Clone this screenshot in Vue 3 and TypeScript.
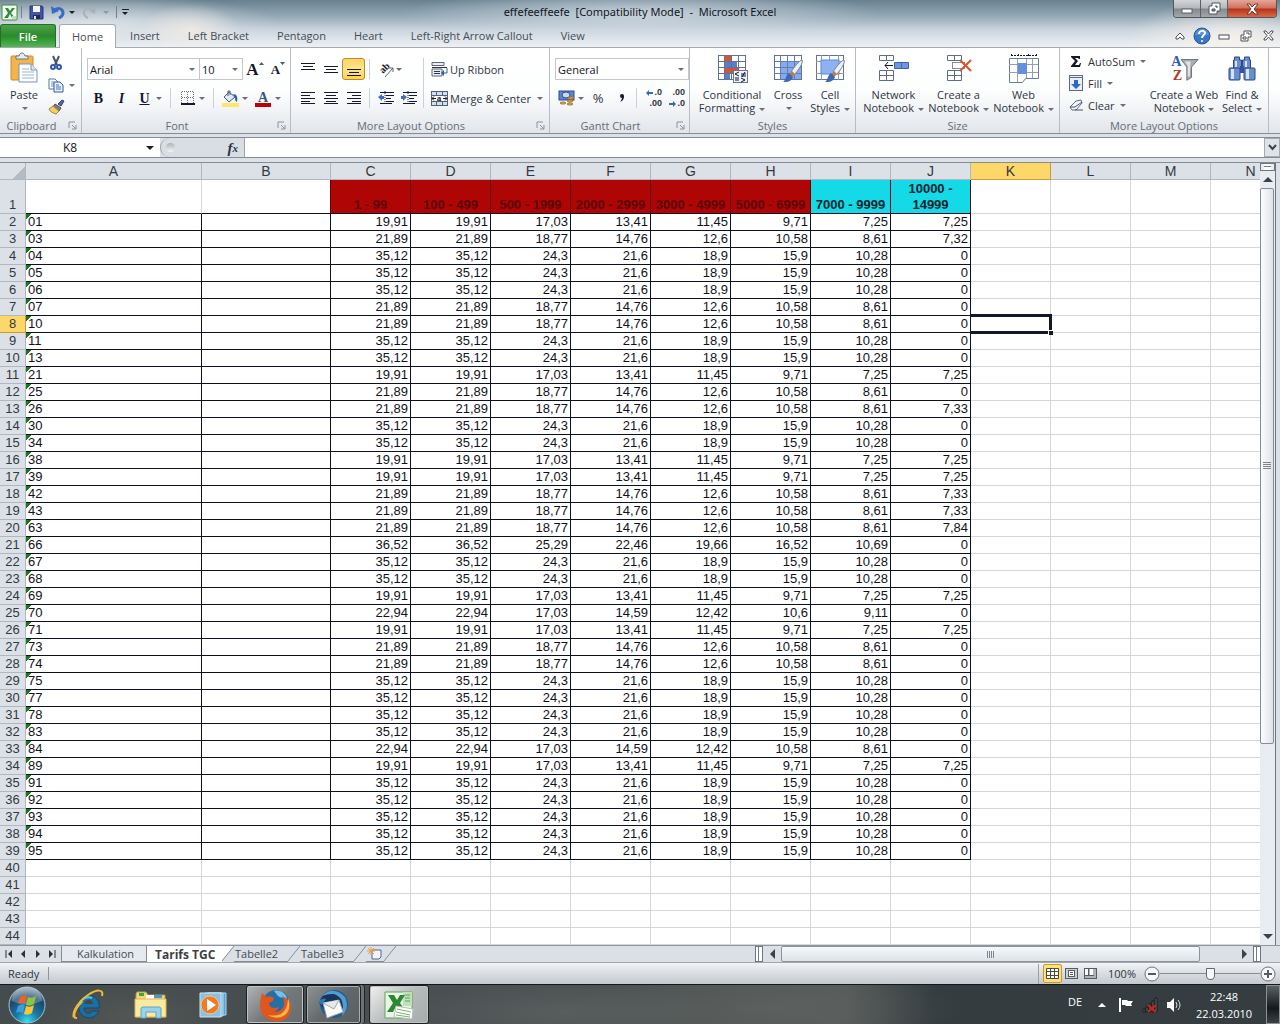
<script setup lang="ts">
import { ref } from 'vue'

interface PriceRow {
  code: string
  values: string[]
}

const profiles: Record<string, string[]> = {
  a: ['19,91', '19,91', '17,03', '13,41', '11,45', '9,71', '7,25'],
  b: ['21,89', '21,89', '18,77', '14,76', '12,6', '10,58', '8,61'],
  c: ['35,12', '35,12', '24,3', '21,6', '18,9', '15,9', '10,28'],
  d: ['36,52', '36,52', '25,29', '22,46', '19,66', '16,52', '10,69'],
  e: ['22,94', '22,94', '17,03', '14,59', '12,42', '10,6', '9,11'],
  f: ['22,94', '22,94', '17,03', '14,59', '12,42', '10,58', '8,61'],
}

// code, price profile and the price for the largest quantity
const source: [string, string, string][] = [
  ['01', 'a', '7,25'], ['03', 'b', '7,32'], ['04', 'c', '0'], ['05', 'c', '0'], ['06', 'c', '0'],
  ['07', 'b', '0'], ['10', 'b', '0'], ['11', 'c', '0'], ['13', 'c', '0'], ['21', 'a', '7,25'],
  ['25', 'b', '0'], ['26', 'b', '7,33'], ['30', 'c', '0'], ['34', 'c', '0'], ['38', 'a', '7,25'],
  ['39', 'a', '7,25'], ['42', 'b', '7,33'], ['43', 'b', '7,33'], ['63', 'b', '7,84'], ['66', 'd', '0'],
  ['67', 'c', '0'], ['68', 'c', '0'], ['69', 'a', '7,25'], ['70', 'e', '0'], ['71', 'a', '7,25'],
  ['73', 'b', '0'], ['74', 'b', '0'], ['75', 'c', '0'], ['77', 'c', '0'], ['78', 'c', '0'],
  ['83', 'c', '0'], ['84', 'f', '0'], ['89', 'a', '7,25'], ['91', 'c', '0'], ['92', 'c', '0'],
  ['93', 'c', '0'], ['94', 'c', '0'], ['95', 'c', '0'],
]
const rows: PriceRow[] = source.map(([code, key, last]) => ({ code, values: [...profiles[key], last] }))

const columns = 'ABCDEFGHIJKLMN'.split('')
const ranges = ['1 - 99', '100 - 499', '500 - 1999', '2000 - 2999', '3000 - 4999', '5000 - 6999', '7000 - 9999', '10000 - 14999']
const emptyRows = [40, 41, 42, 43, 44]
const ribbonTabs = ['Home', 'Insert', 'Left Bracket', 'Pentagon', 'Heart', 'Left-Right Arrow Callout', 'View']
const activeTab = ref('Home')
const activeCell = ref('K8')
const formula = ref('')
const zoom = ref(50)
</script>

<template>
  <div class="window">
    <header class="chrome">
      <div class="titlebar">
        <div class="quick">
          <svg width="17" height="17" viewBox="0 0 17 17"><rect x="1" y="1" width="15" height="15" rx="1" fill="#f3faf3" stroke="#3a8a3e" /><path d="M4 4h3l2 3 2-3h3l-4 5 4 5h-3l-2-4-2 4H3l4-5z" fill="#2f8c37" /><path d="M11 12h4v3h-4z" fill="#b9dfbb" /></svg>
          <span class="bar"></span>
          <button class="plain q1" aria-label="Save"><svg width="15" height="15" viewBox="0 0 15 15"><path d="M1 1h12l1 1v12H1z" fill="#4354a5" stroke="#28356f" /><path d="M4 1h7v6H4z" fill="#f3f6fc" /><path d="M4 10h7v4H4z" fill="#22294b" /><path d="M5 11h2v3H5z" fill="#dfe5f3" /></svg></button>
          <button class="plain q2" aria-label="Undo"><svg width="14" height="13" viewBox="0 0 14 13"><path d="M3 5c3-4 9-3 9 2 0 3-2 4-4 5" fill="none" stroke="#3a6cc0" stroke-width="3" /><path d="M0 0l1 8 7-3z" fill="#3a6cc0" /></svg></button>
          <i class="caret dark"></i>
          <button class="plain q4" aria-label="Redo"><svg width="14" height="13" viewBox="0 0 14 13"><path d="M11 5C8 1 2 2 2 7c0 3 2 4 4 5" fill="none" stroke="#a9b1b8" stroke-width="2" /><path d="M14 0l-1 8-6-3z" fill="#a9b1b8" /></svg></button>
          <i class="caret faded"></i>
          <span class="bar last"></span>
          <button class="plain q3" aria-label="Customize toolbar"><span class="overline"></span><i class="caret dark"></i></button>
        </div>
        <h1>effefeeffeefe&nbsp; [Compatibility Mode]&nbsp; -&nbsp; Microsoft Excel</h1>
        <div class="controls">
          <button aria-label="Minimize"><svg width="12" height="12" viewBox="0 0 12 12"><rect x="1" y="6" width="10" height="4" fill="#fff" stroke="#5b6168" /></svg></button>
          <button aria-label="Restore"><svg width="13" height="13" viewBox="0 0 13 13"><path d="M4 1h8v8h-3v3H1V4h3z" fill="#fff" stroke="#50565e" /><path d="M4 7h3v2H4zM7 4h2v2" fill="#7d858d" stroke="#50565e" /></svg></button>
          <button class="close" aria-label="Close"><svg width="13" height="12" viewBox="0 0 13 12"><path d="M1 1h3l2 3 3-3h3L8 6l4 5H9L6 8l-2 3H1l4-5z" fill="#fff" stroke="#6a3830" /></svg></button>
        </div>
      </div>
      <nav class="tabs">
        <button class="file">File</button>
        <button v-for="tab in ribbonTabs" :key="tab" :class="['tab', { active: tab === activeTab }]" @click="activeTab = tab">{{ tab }}</button>
        <div class="docbuttons">
          <button class="plain" aria-label="Collapse ribbon"><svg width="10" height="10" viewBox="0 0 10 10"><path d="M1 6l4-4 4 4v2H7L5 6 3 8H1z" fill="#fff" stroke="#4a4f58" /></svg></button>
          <button class="plain" aria-label="Help"><svg width="18" height="18" viewBox="0 0 18 18"><circle cx="9" cy="9" r="8" fill="#3b77c8" stroke="#2a559c" /><path d="M2 8a7 6 0 0 1 14 0" fill="#6fa0de" opacity=".6" /><path d="M6 7c0-4 6-4 6-1 0 2-3 2-3 5" fill="none" stroke="#fff" stroke-width="2" /><circle cx="9" cy="14" r="1" fill="#fff" /></svg></button>
          <button class="plain" aria-label="Minimize workbook"><svg width="12" height="12" viewBox="0 0 12 12"><rect x="1" y="5" width="10" height="4" fill="#fff" stroke="#4a4f58" /></svg></button>
          <button class="plain" aria-label="Restore workbook"><svg width="12" height="12" viewBox="0 0 12 12"><path d="M4 1h7v6H8v4H1V5h3z" fill="#fff" stroke="#4a4f58" /><path d="M3 7h3v2H3zM6 3h3v2" fill="none" stroke="#4a4f58" /></svg></button>
          <button class="plain" aria-label="Close workbook"><svg width="11" height="11" viewBox="0 0 11 11"><path d="M1 1h2l2.500 3L8 1h2v1L7 5.500 10 9v1H8L5.500 7 3 10H1V9l3-3.500L1 2z" fill="#fff" stroke="#4a4f58" /></svg></button>
        </div>
      </nav>
    </header>

    <section class="ribbon">
      <div class="group g-clip">
        <div class="body top">
          <button class="large paste">
            <svg width="28" height="32" viewBox="0 0 28 32"><rect x="1" y="4" width="22" height="24" rx="1" fill="#f2b44d" stroke="#c98a2c" /><path d="M6 7V4h3c1-4 5-4 6 0h3v3z" fill="#e8ecf0" stroke="#6b7683" /><path d="M9 12h12l6 6v12H9z" fill="#fdfeff" stroke="#7d93b2" /><path d="M21 12v6h6" fill="#dce6f3" stroke="#7d93b2" /><path d="M12 17h7M12 20h12M12 23h12M12 26h12" stroke="#9fb4d2" /></svg>
            <span>Paste</span><span class="line"><i class="caret"></i></span>
          </button>
          <div class="stack">
            <button class="plain" aria-label="Cut"><svg width="16" height="16" viewBox="0 0 16 16"><path d="M5 1l4 9M11 1L7 10" stroke="#4a5364" stroke-width="2" fill="none" /><circle cx="5" cy="12" r="2" fill="none" stroke="#3158a8" stroke-width="2" /><circle cx="11" cy="12" r="2" fill="none" stroke="#3158a8" stroke-width="2" /></svg></button>
            <button class="plain" aria-label="Copy"><svg width="16" height="16" viewBox="0 0 16 16"><path d="M1 2h6l3 3v7H1z" fill="#fff" stroke="#5675a8" /><path d="M3 5h3M3 7h5M3 9h5" stroke="#6b93d0" /><path d="M6 5h6l3 3v7H6z" fill="#e9f1fc" stroke="#35599a" /><path d="M8 8h3M8 10h5M8 12h5" stroke="#4374c0" /></svg><i class="caret"></i></button>
            <button class="plain" aria-label="Format Painter"><svg width="17" height="16" viewBox="0 0 17 16"><path d="M10 5l4-4 2 1-3 5z" fill="#566a9c" stroke="#364571" /><path d="M7 5l6 4-2 3-6-4z" fill="#7c7f86" stroke="#4d5058" /><path d="M5 7l6 5-3 3c-3-1-6-2-7-5z" fill="#f5cf61" stroke="#a6843a" /></svg></button>
          </div>
        </div>
        <div class="caption"><span class="pad">Clipboard</span><svg width="9" height="9" viewBox="0 0 9 9"><path d="M1 7V1h6M4 4l4 4M8 4v4H4" fill="none" stroke="#8d939b" /></svg></div>
      </div>

      <div class="group g-font">
        <div class="body two">
          <div class="row">
            <span class="pick w-font"><select aria-label="Font"><option>Arial</option></select></span>
            <span class="pick w-size"><select aria-label="Font size"><option>10</option></select></span>
            <button class="tool serif big" aria-label="Grow Font">A<svg width="5" height="3" viewBox="0 0 5 3"><path d="M0 3h5L2.500 0z" fill="#3d5b93" /></svg></button>
            <button class="tool serif mid" aria-label="Shrink Font">A<svg width="5" height="3" viewBox="0 0 5 3"><path d="M0 0h5L2.500 3z" fill="#3d5b93" /></svg></button>
          </div>
          <div class="row">
            <button class="tool serif b">B</button>
            <button class="tool serif i">I</button>
            <button class="tool serif u">U</button><i class="caret"></i>
            <span class="sep"></span>
            <button class="tool" aria-label="Borders"><svg width="14" height="14" viewBox="0 0 14 14"><path d="M1 .5h12M1 6.500h12M.5 1v12M6.500 1v12M12.500 1v12" stroke="#6c7179" stroke-dasharray="1 1" /><path d="M0 13h14" stroke="#16192e" stroke-width="2" /></svg></button><i class="caret"></i>
            <span class="sep"></span>
            <button class="tool" aria-label="Fill Color"><svg width="17" height="17" viewBox="0 0 17 17"><path d="M7 2l6 5-6 5-5-5z" fill="#dfe8f4" stroke="#465d86" /><path d="M6 6V1h2v4" fill="none" stroke="#465d86" /><path d="M11 4c4 0 5 3 4 8-2-1-2-3-2-5z" fill="#2e5fae" /><rect y="13" width="17" height="4" fill="#ffe66a" /></svg></button><i class="caret"></i>
            <button class="tool fontc" aria-label="Font Color"><svg width="17" height="18" viewBox="0 0 17 18"><text x="8" y="13" text-anchor="middle" font-family="Liberation Serif, serif" font-weight="700" font-size="14" fill="#3a5489">A</text><rect y="14" width="16" height="4" fill="#c00000" /></svg></button><i class="caret"></i>
          </div>
        </div>
        <div class="caption"><span class="pad">Font</span><svg width="9" height="9" viewBox="0 0 9 9"><path d="M1 7V1h6M4 4l4 4M8 4v4H4" fill="none" stroke="#8d939b" /></svg></div>
      </div>

      <div class="group g-align">
        <div class="body split">
          <div class="half">
            <div class="row">
              <button class="tool" aria-label="Top Align"><svg width="14" height="14" viewBox="0 0 14 14"><path d="M0 1.500h14M2 4.500h10M0 7.500h14" stroke="#15182c" /></svg></button>
              <button class="tool" aria-label="Middle Align"><svg width="14" height="14" viewBox="0 0 14 14"><path d="M0 4.500h14M2 7.500h10M0 10.500h14" stroke="#15182c" /></svg></button>
              <button class="tool on" aria-label="Bottom Align"><svg width="14" height="14" viewBox="0 0 14 14"><path d="M0 7.500h14M2 10.500h10M0 13.500h14" stroke="#15182c" /></svg></button>
              <span class="sep"></span>
              <button class="tool orient" aria-label="Orientation"><svg width="18" height="17" viewBox="0 0 18 17"><text transform="rotate(-45 6 13)" x="6" y="13" font-family="Liberation Serif, serif" font-weight="700" font-size="10" fill="#16192b">ab</text><path d="M8 16l8-9M16 11V7h-4" fill="none" stroke="#5c626c" /></svg><i class="caret"></i></button>
            </div>
            <div class="row">
              <button class="tool" aria-label="Align Left"><svg width="14" height="14" viewBox="0 0 14 14"><path d="M0 1.500h14M0 4.500h9M0 7.500h14M0 10.500h9M0 12.500h14" stroke="#15182c" /></svg></button>
              <button class="tool" aria-label="Center"><svg width="14" height="14" viewBox="0 0 14 14"><path d="M0 1.500h14M2 4.500h10M0 7.500h14M2 10.500h10M0 12.500h14" stroke="#15182c" /></svg></button>
              <button class="tool" aria-label="Align Right"><svg width="14" height="14" viewBox="0 0 14 14"><path d="M0 1.500h14M5 4.500h9M0 7.500h14M5 10.500h9M0 12.500h14" stroke="#15182c" /></svg></button>
              <span class="sep"></span>
              <button class="tool" aria-label="Decrease Indent"><svg width="16" height="14" viewBox="0 0 16 14"><path d="M2 1.500h14M8 4.500h8M8 7.500h5M8 10.500h8M2 12.500h12" stroke="#15182c" /><path d="M7 0v14" stroke="#15182c" stroke-dasharray="1 1" /><path d="M0 6l4-3v2h2v3H4v2z" fill="#3c6fc0" /></svg></button>
              <button class="tool" aria-label="Increase Indent"><svg width="16" height="14" viewBox="0 0 16 14"><path d="M2 1.500h14M8 4.500h8M8 7.500h5M8 10.500h8M2 12.500h12" stroke="#15182c" /><path d="M7 0v14" stroke="#15182c" stroke-dasharray="1 1" /><path d="M6 6L2 3v2H0v3h2v2z" fill="#3c6fc0" /></svg></button>
            </div>
          </div>
          <span class="tallsep"></span>
          <div class="half right">
            <button class="text"><svg width="17" height="15" viewBox="0 0 17 15"><path d="M1 .5h12v3H1zM1 7h10v7H1z" fill="#e6eef9" stroke="#5f6672" /><path d="M1 5.500h15M3 9.500h6M3 11.500h6" stroke="#2d3450" /><path d="M16 6v5h-3" fill="none" stroke="#2e5fae" /><path d="M13 8v6l-3-3z" fill="#2e5fae" /></svg>Up Ribbon</button>
            <button class="text"><svg width="17" height="15" viewBox="0 0 17 15"><rect x=".5" y=".5" width="16" height="14" fill="#cfe0f6" stroke="#56606f" /><path d="M0 4.500h17M0 10.500h17M5.500 0v4M11.500 0v4M5.500 11v4M11.500 11v4" stroke="#56606f" /><rect x="1" y="5" width="15" height="5" fill="#fff" /><path d="M1 7.500h4M12 7.500h4M3 5.500L1 7.500 3 9.500M14 5.500l2 2-2 2" stroke="#15182c" fill="none" /><text x="8" y="10" text-anchor="middle" font-family="Liberation Serif, serif" font-weight="700" font-size="9" fill="#15182c">a</text></svg>Merge &amp; Center<i class="caret"></i></button>
          </div>
        </div>
        <div class="caption"><span class="pad">More Layout Options</span><svg width="9" height="9" viewBox="0 0 9 9"><path d="M1 7V1h6M4 4l4 4M8 4v4H4" fill="none" stroke="#8d939b" /></svg></div>
      </div>

      <div class="group g-number">
        <div class="body two">
          <div class="row"><span class="pick w-num"><select aria-label="Number format"><option>General</option></select></span></div>
          <div class="row">
            <button class="tool" aria-label="Currency"><svg width="17" height="16" viewBox="0 0 17 16"><rect x="1" y="1" width="15" height="9" fill="#5f86cb" stroke="#2a4b8d" /><ellipse cx="8" cy="5" rx="4" ry="3" fill="#c6d8f2" stroke="#2a4b8d" /><g fill="#f2b54a" stroke="#a8742a"><ellipse cx="12" cy="14" rx="3" ry="1" /><ellipse cx="12" cy="11" rx="3" ry="1" /><ellipse cx="13" cy="8" rx="3" ry="1" /><ellipse cx="5" cy="13" rx="3" ry="1" /></g></svg></button><i class="caret"></i>
            <button class="tool pct">%</button>
            <button class="tool comma" aria-label="Comma Style"><svg width="6" height="10" viewBox="0 0 6 10"><circle cx="3" cy="3" r="2" fill="#16192b" /><path d="M5 3c0 3-1 5-4 6 1-1 2-3 2-5z" fill="#16192b" /></svg></button>
            <span class="sep narrow"></span>
            <button class="tool dec" aria-label="Increase Decimal"><span><svg width="7" height="6" viewBox="0 0 7 6"><path d="M0 3l3-3v2h4v2H3v2z" fill="#2e6bc0" /></svg>.0</span><span>.00</span></button>
            <button class="tool dec" aria-label="Decrease Decimal"><span>.00</span><span><svg width="7" height="6" viewBox="0 0 7 6"><path d="M7 3L4 0v2H0v2h4v2z" fill="#2e6bc0" /></svg>.0</span></button>
          </div>
        </div>
        <div class="caption"><span class="pad">Gantt Chart</span><svg width="9" height="9" viewBox="0 0 9 9"><path d="M1 7V1h6M4 4l4 4M8 4v4H4" fill="none" stroke="#8d939b" /></svg></div>
      </div>

      <div class="group g-styles">
        <div class="body top">
          <button class="large w70">
            <svg width="32" height="32" viewBox="0 0 32 32"><rect x="2.500" y="3.500" width="27" height="24" fill="#fff" stroke="#63728d" /><path d="M9 4h7v5H9zM9 16h14v5H9z" fill="#e2502b" /><path d="M9 10h12v5H9zM9 22h5v5H9z" fill="#4f82d6" /><path d="M2 9.500h28M2 15.500h28M2 21.500h28M8.500 3v25M15.500 3v25M22.500 3v25" stroke="#63728d" /><rect x="17.500" y="18.500" width="14" height="12" fill="#eef3fb" stroke="#67758e" /><path d="M23 20l-4 2 4 2M19 26h4M19 28h4M25 22h5M25 24h5M29 20l-3 5M25 26l4 2-4 2" fill="none" stroke="#15182c" /></svg>
            <span>Conditional</span><span>Formatting <i class="caret"></i></span>
          </button>
          <button class="large w42">
            <svg width="32" height="32" viewBox="0 0 32 32"><rect x="2.500" y="3.500" width="27" height="24" fill="#fff" stroke="#63728d" /><rect x="9" y="9" width="20" height="18" fill="#86abec" /><path d="M2 9.500h28M2 15.500h28M2 21.500h28M8.500 3v25M15.500 3v25M22.500 3v25" stroke="#5f7eb5" /><path d="M30 8c2 2-4 11-8 15l-3-3c3-5 9-12 11-12z" fill="#eceff3" stroke="#7c8390" /><path d="M20 19l3 3-3 3-3-3z" fill="#b87d4b" /><path d="M17 21l4 4c-2 5-6 5-10 5 3-2 2-6 6-9z" fill="#3c68b4" /></svg>
            <span>Cross</span><span class="line"><i class="caret"></i></span>
          </button>
          <button class="large w42">
            <svg width="32" height="32" viewBox="0 0 32 32"><rect x="2.500" y="3.500" width="27" height="24" fill="#fff" stroke="#63728d" /><path d="M2 9.500h28M2 21.500h28M7.500 3v25M15.500 3v25M24.500 3v25" stroke="#8a9cba" /><rect x="7" y="8" width="18" height="14" fill="#8cb2f2" stroke="#628ad0" /><path d="M30 8c2 2-4 11-8 15l-3-3c3-5 9-12 11-12z" fill="#eceff3" stroke="#7c8390" /><path d="M20 19l3 3-3 3-3-3z" fill="#b87d4b" /><path d="M17 21l4 4c-2 5-6 5-10 5 3-2 2-6 6-9z" fill="#3c68b4" /></svg>
            <span>Cell</span><span>Styles <i class="caret"></i></span>
          </button>
        </div>
        <div class="caption"><span>Styles</span></div>
      </div>

      <div class="group g-size">
        <div class="body top">
          <button class="large w65">
            <svg width="32" height="32" viewBox="0 0 32 32"><path d="M1.500 3.500h14v5h-14zM8.500 3v6M1.500 18.500h14v10h-14zM1 23.500h15M8.500 18v11" fill="#fff" stroke="#5f6e88" /><path d="M16.500 10.500h14v6h-14z" fill="#6a96e4" stroke="#3f65a9" /><path d="M23.500 10v7" stroke="#3f65a9" /><path d="M7 13.500h8M10 10l-3 3.500 3 3.500" fill="none" stroke="#15182c" stroke-width="1" /></svg>
            <span>Network</span><span>Notebook <i class="caret"></i></span>
          </button>
          <button class="large w65">
            <svg width="32" height="32" viewBox="0 0 32 32"><path d="M4.500 3.500h14v5h-14zM11.500 3v6M4.500 18.500h14v10h-14zM4 23.500h15M11.500 18v11" fill="#fff" stroke="#5f6e88" /><path d="M9.500 10.500h12v6h-12z" fill="none" stroke="#15182c" stroke-dasharray="1 1" /><path d="M17 8l11 11M28 8L17 19" stroke="#df522a" stroke-width="2" /></svg>
            <span>Create a</span><span>Notebook <i class="caret"></i></span>
          </button>
          <button class="large w65">
            <svg width="32" height="32" viewBox="0 0 32 32"><path d="M3 3.500h26M3.500 2v3M28.500 2v3M10.500 2v3M20.500 2v3" stroke="#15182c" stroke-dasharray="2 1" /><path d="M1.500 6.500h29v20h-13l-3 4h-13z" fill="#fff" stroke="#6d7c95" /><path d="M1 12.500h29M1 20.500h29M9.500 7v23M18.500 7v19M24.500 7v19" stroke="#93a1b7" /><rect x="10" y="11" width="9" height="11" fill="#658fe0" /></svg>
            <span>Web</span><span>Notebook <i class="caret"></i></span>
          </button>
        </div>
        <div class="caption"><span>Size</span></div>
      </div>

      <div class="group g-edit">
        <div class="body top">
          <div class="stack wide">
            <button class="text"><svg width="14" height="16" viewBox="0 0 14 16"><path d="M2 3h9v3h-1l-1-1H6l3 3-3 4h4l1-2h1l-1 4H2v-1l4-5-4-4z" fill="#15182c" /></svg>AutoSum <i class="caret"></i></button>
            <button class="text"><svg width="14" height="16" viewBox="0 0 14 16"><rect x=".5" y=".5" width="13" height="15" fill="#e8f0fb" stroke="#5d6b86" /><path d="M0 2.500h14" stroke="#5d6b86" /><path d="M5 5h4v4h3l-5 5-5-5h3z" fill="#2c67c4" /></svg>Fill <i class="caret"></i></button>
            <button class="text"><svg width="14" height="16" viewBox="0 0 14 16"><path d="M1 10l6-6 5-1 1 3-6 7H3z" fill="#f4f7fb" stroke="#5d6b86" /><path d="M1 10h5l7-5M6 13h8" fill="none" stroke="#47536b" /></svg>Clear <i class="caret"></i></button>
          </div>
          <button class="large w80">
            <svg width="32" height="34" viewBox="0 0 32 34"><path d="M13 8h18l-7 8v11l-5 3V16z" fill="#a9adb3" stroke="#6a6f76" /><path d="M17 10h6l-1 16h-2V15z" fill="#e1e3e6" /><text x="8" y="15" text-anchor="middle" font-family="Liberation Serif, serif" font-weight="700" font-size="15" fill="#2f5bb0">A</text><text x="9" y="30" text-anchor="middle" font-family="Liberation Serif, serif" font-weight="700" font-size="15" fill="#b3362c">Z</text></svg>
            <span>Create a Web</span><span>Notebook <i class="caret"></i></span>
          </button>
          <button class="large w40">
            <svg width="32" height="32" viewBox="0 0 32 32"><g fill="#6b8fcc" stroke="#2b4784"><path d="M8.500 5h5v3h2v9h-8V8h1zM18.500 5h5v3h1v9h-8V8h2z" /><rect x="3" y="16" width="11" height="12" rx="1" /><rect x="18" y="16" width="11" height="12" rx="1" /></g><path d="M14 14h4v7h-4z" fill="#34529a" /><path d="M5 17h3v10H5zM20 17h3v10h-3zM9 9h2v6H9zM19 9h2v6h-2z" fill="#d5e2f7" /></svg>
            <span>Find &amp;</span><span>Select <i class="caret"></i></span>
          </button>
        </div>
        <div class="caption"><span>More Layout Options</span></div>
      </div>
    </section>

    <section class="formula">
      <label class="namebox"><input v-model="activeCell" aria-label="Name Box" /><i class="caret dark"></i></label>
      <div class="fx"><span class="knob"></span><button class="plain">f<sub>x</sub></button></div>
      <input v-model="formula" class="entry" aria-label="Formula" />
      <button class="expand" aria-label="Expand formula bar"><svg width="9" height="7" viewBox="0 0 9 7"><path d="M1 1l3.500 4L8 1" fill="none" stroke="#3d444d" stroke-width="2" /></svg></button>
    </section>

    <main class="sheet">
      <div class="cells">
        <table>
          <colgroup><col class="c-head" /><col class="c-a" /><col class="c-b" /><col v-for="n in 12" :key="n" class="c-n" /></colgroup>
          <thead>
            <tr><th class="corner"></th><th v-for="c in columns" :key="c" scope="col" :class="{ sel: c === 'K' }">{{ c }}</th></tr>
          </thead>
          <tbody>
            <tr class="tall">
              <th scope="row">1</th>
              <td class="under"></td><td class="under edge"></td>
              <td v-for="(r, i) in ranges" :key="r" :class="['range', i < 6 ? 'red' : 'cyan']">{{ r }}</td>
              <td v-for="n in 4" :key="n"></td>
            </tr>
            <tr v-for="(row, i) in rows" :key="row.code">
              <th scope="row" :class="{ sel: i === 6 }">{{ i + 2 }}</th>
              <td class="ink code">{{ row.code }}</td>
              <td class="ink"></td>
              <td v-for="(v, j) in row.values" :key="j" class="ink num">{{ v }}</td>
              <td :class="{ cursor: i === 6 }"><span v-if="i === 6" class="frame"></span></td>
              <td></td><td></td><td></td>
            </tr>
            <tr v-for="n in emptyRows" :key="n"><th scope="row">{{ n }}</th><td v-for="c in columns" :key="c"></td></tr>
          </tbody>
        </table>
      </div>
      <div class="vscroll">
        <span class="splitbox"></span>
        <button aria-label="Scroll up"><i class="tri up"></i></button>
        <div class="thumb"><span class="grip"></span></div>
        <div class="track"></div>
        <button aria-label="Scroll down"><i class="tri down"></i></button>
      </div>
    </main>

    <section class="sheetbar">
      <div class="nav">
        <button class="plain" aria-label="First sheet"><svg width="8" height="8" viewBox="0 0 8 8"><path d="M1 0v8" stroke="#2c3138" stroke-width="1" /><path d="M7 0v8L3 4z" fill="#2c3138" /></svg></button>
        <button class="plain" aria-label="Previous sheet"><svg width="8" height="8" viewBox="0 0 8 8"><path d="M6 0v8L2 4z" fill="#2c3138" /></svg></button>
        <button class="plain" aria-label="Next sheet"><svg width="8" height="8" viewBox="0 0 8 8"><path d="M2 0v8l4-4z" fill="#2c3138" /></svg></button>
        <button class="plain" aria-label="Last sheet"><svg width="8" height="8" viewBox="0 0 8 8"><path d="M7 0v8" stroke="#2c3138" stroke-width="1" /><path d="M1 0v8l4-4z" fill="#2c3138" /></svg></button>
      </div>
      <button class="stab first">Kalkulation</button>
      <button class="stab current">Tarifs TGC</button>
      <svg width="12" height="16" viewBox="0 0 12 16"><path d="M0 0h12L0 14z" fill="#fff" /><path d="M0 15L12 0" stroke="#858c96" /></svg>
      <button class="stab">Tabelle2</button>
      <svg width="12" height="16" viewBox="0 0 12 16"><path d="M0 15L12 0" stroke="#858c96" /></svg>
      <button class="stab">Tabelle3</button>
      <svg width="12" height="16" viewBox="0 0 12 16"><path d="M0 15L12 0" stroke="#858c96" /></svg>
      <button class="stab new" aria-label="Insert sheet"><svg width="16" height="13" viewBox="0 0 16 13"><path d="M5 3h9v7l-2 2H5z" fill="#f2f6fc" stroke="#4f6695" /><path d="M4 0v8M0 4h8M1 1l6 6M7 1L1 7" stroke="#e7a13a" /></svg></button>
      <svg width="12" height="16" viewBox="0 0 12 16"><path d="M0 15L12 0" stroke="#858c96" /></svg>
      <div class="hscroll">
        <span class="vsplit"></span>
        <button aria-label="Scroll left"><i class="tri left"></i></button>
        <div class="hthumb"><span class="vgrip"></span></div>
        <div class="htrack"></div>
        <button aria-label="Scroll right"><i class="tri rightward"></i></button>
        <span class="vsplit"></span>
      </div>
    </section>

    <footer class="status">
      <span class="ready">Ready</span>
      <div class="view">
        <button class="on" aria-label="Normal view"><svg width="13" height="11" viewBox="0 0 13 11"><path d="M.5.5h12v10H.5zM0 3.500h13M0 7.500h13M4.500 0v11M8.500 0v11" fill="#fff" stroke="#4d4a3c" /></svg></button>
        <button aria-label="Page layout"><svg width="13" height="11" viewBox="0 0 13 11"><rect x=".5" y=".5" width="12" height="10" fill="#c9ced4" stroke="#585d64" /><rect x="3.500" y="2.500" width="6" height="6" fill="#fff" stroke="#585d64" /><path d="M5 4.500h3M5 6.500h3" stroke="#585d64" /></svg></button>
        <button aria-label="Page break preview"><svg width="13" height="11" viewBox="0 0 13 11"><rect x=".5" y=".5" width="12" height="10" fill="#aeb3ba" stroke="#585d64" /><path d="M1 1h3v6H1zM6 1h3v6H6z" fill="#fff" /><path d="M4.500 1v6M1 7.500h9" stroke="#585d64" /></svg></button>
        <span class="pctlabel">100%</span>
        <button class="round" aria-label="Zoom out"><svg width="16" height="16" viewBox="0 0 16 16"><circle cx="8" cy="8" r="7" fill="#f7f8fa" stroke="#6d737b" /><path d="M4 8h8" stroke="#555b63" stroke-width="2" /></svg></button>
        <input v-model="zoom" type="range" min="0" max="100" aria-label="Zoom" />
        <button class="round" aria-label="Zoom in"><svg width="16" height="16" viewBox="0 0 16 16"><circle cx="8" cy="8" r="7" fill="#f7f8fa" stroke="#6d737b" /><path d="M4 8h8M8 4v8" stroke="#555b63" stroke-width="2" /></svg></button>
      </div>
    </footer>

    <footer class="taskbar">
      <button class="plain orb" aria-label="Start">
        <svg width="38" height="38" viewBox="0 0 38 38"><defs><radialGradient id="orb" cx=".5" cy=".95" r=".9"><stop offset="0" stop-color="#31e0f2" /><stop offset=".35" stop-color="#1b7ba4" /><stop offset=".75" stop-color="#1c466c" /><stop offset="1" stop-color="#7f9cae" /></radialGradient></defs><circle cx="19" cy="19" r="18" fill="url(#orb)" stroke="#a5c0cc" /><path d="M4 15a15 14 0 0 1 30 0q-15 7-30 0z" fill="#fff" opacity=".25" /><path d="M12 11q4-3 7-1l-2 8q-4-2-7 0z" fill="#e8622c" /><path d="M20 11q4 2 8-1l-2 8q-4 3-8 1z" fill="#8cc63e" /><path d="M10 20q4-3 7-1l-2 8q-4-2-7 0z" fill="#3a9de0" /><path d="M18 20q4 2 8-1l-2 8q-4 3-8 1z" fill="#fbc531" /></svg>
      </button>
      <button class="plain app" aria-label="Internet Explorer">
        <svg width="34" height="34" viewBox="0 0 34 34"><path d="M28 23c-3 7-12 9-17 4-6-6-3-18 6-19 8-1 12 5 11 12H13c0 6 6 7 8 3z" fill="#1a6fa5" stroke="#0f4c78" /><path d="M13 16h9c0-5-8-6-9 0z" fill="#41484a" /><path d="M9 15c2-5 8-7 12-5" fill="none" stroke="#5ec4e4" stroke-width="2" /><path d="M6 30C-2 31 6 14 17 7c9-6 16-6 14 1" fill="none" stroke="#edb93b" stroke-width="2" /><path d="M3 29c-1-5 4-12 8-16" fill="none" stroke="#edb93b" stroke-width="3" /></svg>
      </button>
      <button class="plain app" aria-label="Explorer">
        <svg width="34" height="34" viewBox="0 0 34 34"><path d="M2 6l1-2h9l2 3h17v22H2z" fill="#f2d67c" stroke="#b89a4a" /><path d="M5 5h5v3H5z" fill="#3da544" /><path d="M12 7h8v4h-8z" fill="#fff" /><path d="M20 7h8v3h-8z" fill="#4e93d6" /><path d="M1 11h31v18H1z" fill="#fbea9e" stroke="#d4b75f" /><path d="M7 30V21q0-2 2-2h16q2 0 2 2v9h-5v-6H12v6z" fill="#97d3ee" stroke="#5da3c8" /></svg>
      </button>
      <button class="plain app" aria-label="Media Player">
        <svg width="30" height="30" viewBox="0 0 30 30"><path d="M10 3h18v22H10z" fill="#5da0cf" stroke="#a9d7ef" /><path d="M7 3h18v23H7z" fill="#75b4db" stroke="#b9def2" /><path d="M2 3h21v24H2z" fill="#8bc0e1" stroke="#c6e6f6" /><circle cx="12" cy="15" r="9" fill="#ee7b28" stroke="#f9c389" /><path d="M9 9l9 6-9 6z" fill="#fff" /></svg>
      </button>
      <button class="win" aria-label="Firefox">
        <svg width="34" height="34" viewBox="0 0 34 34"><circle cx="18" cy="15" r="13" fill="#256fa9" /><path d="M16 3c6-2 13 3 13 8-4-3-6 0-9-3z" fill="#6fc2e8" /><path d="M4 5l4 4q4-2 8 1l-1 3-4 2q0 5 6 5l4-1q-2 5-7 4 8 3 12-5 1-6-2-10 9 4 9 11c0 17-20 17-27 9-6-7-4-15-2-23z" fill="#e0561c" /><path d="M30 10c6 17-9 24-20 17 15 3 20-6 20-17z" fill="#f8b545" /></svg>
      </button>
      <button class="win stacked" aria-label="Thunderbird">
        <svg width="34" height="34" viewBox="0 0 34 34"><circle cx="17" cy="16" r="14" fill="#235a94" /><path d="M5 8Q16-3 28 9q5 11-3 19 3-12-7-18Q10 5 5 8z" fill="#4e9fd0" /><path d="M2 15Q4 5 17 6q9 3 9 13-4 9-13 9z" fill="#17355e" /><path d="M6 15l16-3 4 12-16 6z" fill="#fafafa" stroke="#a4a6aa" /><path d="M6 15l11 6 5-9" fill="#e6e8ec" stroke="#a4a6aa" /><path d="M1 14q4-5 8-3l-4 6z" fill="#2f7ab8" /></svg>
      </button>
      <button class="win current" aria-label="Excel">
        <svg width="32" height="32" viewBox="0 0 32 32"><path d="M2 3h27v26H2z" fill="#e9f5e6" stroke="#5fa55b" /><path d="M20 3h9v14h-9z" fill="#bfe0b8" /><path d="M22 6h5M22 9h5M22 12h5" stroke="#5fa55b" /><path d="M5 6h6l3 5 3-5h5l-5 8 6 9h-6l-4-6-3 6H4l6-9z" fill="#2c8734" /><path d="M13 17l17 3-1 10-18-2z" fill="#fff" stroke="#b0c4ae" /><path d="M14 20l14 3M13 23l14 3M13 26l14 2" stroke="#79b577" /></svg>
      </button>
      <div class="tray">
        <span class="lang">DE</span>
        <i class="tri up light"></i>
        <svg width="16" height="16" viewBox="0 0 16 16"><path d="M2 1v14" stroke="#fff" stroke-width="2" /><path d="M4 3h5l1 1h5l-2 3 1 2H8L7 8H4z" fill="#fff" /></svg>
        <svg width="16" height="16" viewBox="0 0 16 16"><path d="M1 15v-3h2v3zM4 15v-5h2v5zM7 15V7h2v8zM10 15V4h2v11zM13 15V1h2v14z" fill="#6a7174" stroke="#14181a" /><path d="M6 8l8 7M14 8l-8 7" stroke="#d32020" stroke-width="2" /></svg>
        <svg width="16" height="16" viewBox="0 0 16 16"><path d="M1 5h3l4-4v14l-4-4H1z" fill="#fff" /><path d="M10 5q2 3 0 6M12 3q4 5 0 10" fill="none" stroke="#d8dbdd" /></svg>
      </div>
      <div class="clock"><span>22:48</span><span>22.03.2010</span></div>
      <button class="desktop" aria-label="Show desktop"></button>
    </footer>
  </div>
</template>

<style>
body { margin: 0; background: #dce1e7; }
</style>

<style scoped>
* { box-sizing: border-box; }
.window { font: 11px/13px "Open Sans", "Noto Sans", sans-serif; color: #2f353e; overflow: hidden; display: flex; flex-direction: column; min-height: 100vh; }
button { font: inherit; color: inherit; border: 0; padding: 0; margin: 0; background: none; }
svg { display: block; flex: none; }
.plain { display: flex; align-items: center; justify-content: center; }
.caret { display: inline-block; flex: none; width: 0; height: 0; border: 3px solid transparent; border-top: 3px solid #6a6f76; border-bottom: 0; vertical-align: middle; }
.caret.dark { border-top-color: #1b2028; }
.caret.faded { border-top-color: #8f99a2; }

.chrome { background:
  radial-gradient(ellipse 50px 26px at 190px 30px, #f3ece6cc, #f3ece600),
  radial-gradient(ellipse 190px 30px at 90px 24px, #e3e8ecdd, #e3e8ec00),
  radial-gradient(ellipse 240px 26px at 640px 14px, #d5dee6cc, #d5dee600),
  radial-gradient(ellipse 100px 40px at calc(100% - 52px) 40px, #f7f2ecee, #f1eeea00),
  linear-gradient(#68808f, #93a8b6 16px, #cbd5de 30px, #eef1f4 47px); border-bottom: 1px solid #a4abb3; }
.titlebar { height: 24px; display: grid; grid-template-columns: 1fr auto 1fr; align-items: center; }
.quick { display: flex; align-items: center; gap: 3px; padding-left: 1px; }
.bar { width: 1px; height: 12px; background: #747f89; }
.bar.last { margin-left: 4px; }
.q1 { width: 22px; }
.q2 { width: 16px; }
.q3 { flex-direction: column; gap: 2px; width: 10px; }
.q4 { width: 22px; }
.overline { width: 7px; height: 1px; background: #1b2028; }
h1 { margin: 0; font: 11px/16px "Noto Sans", sans-serif; color: #10161e; }
.controls { justify-self: end; align-self: start; display: flex; margin-right: 3px; border: 1px solid #4f565d; border-top: 0; border-radius: 0 0 4px 4px; overflow: hidden; }
.controls button { width: 27px; height: 17px; display: flex; align-items: center; justify-content: center; background: linear-gradient(#d3d5d7, #b5b8bb 8px, #85898d 9px, #a4a8ab); border-right: 1px solid #5a6067; }
.controls .close { width: 48px; border: 0; background: linear-gradient(#e5a698, #d0705c 8px, #b83218 9px, #d96a48); }
.tabs { display: flex; height: 23px; }
.file { width: 56px; margin-right: 3px; color: #fff; background: linear-gradient(#4da24b, #2b8a2d 50%, #2c9630 60%, #57b455); border: 1px solid #226f25; border-bottom: 0; border-radius: 3px 3px 0 0; font-weight: 600; }
.tab { padding: 0 14px; color: #454c55; }
.tab.active { background: #fff; margin-bottom: -1px; border: 1px solid #a4abb3; border-bottom: 0; border-radius: 3px 3px 0 0; padding: 0 12px; }
.docbuttons { margin-left: auto; display: flex; align-items: center; padding-right: 1px; }
.docbuttons button { width: 22px; }

.ribbon { display: flex; height: 86px; background: linear-gradient(#fff, #fdfefe 50%, #f0f2f5 75%, #e1e5ea); border-bottom: 1px solid #858c95; }
.group { flex: none; display: flex; flex-direction: column; border-right: 1px solid #b8bdc4; }
.g-clip { width: 82px; }
.g-font { width: 209px; }
.g-align { width: 259px; }
.g-number { width: 140px; }
.g-styles { width: 166px; }
.g-size { width: 204px; }
.g-edit { width: 209px; }
.body { height: 70px; display: flex; }
.body.top { padding-top: 4px; }
.body.two { flex-direction: column; gap: 7px; padding: 10px 0 0 5px; }
.body.split { padding: 10px 0 0 5px; }
.row { display: flex; align-items: center; height: 22px; }
.caption { height: 14px; display: flex; align-items: center; color: #666c75; padding: 0 4px; }
.caption span { flex: 1; text-align: center; white-space: nowrap; }
.caption .pad { padding-right: 9px; }
.large { display: flex; flex-direction: column; align-items: center; white-space: nowrap; }
.large svg { height: 32px; margin-bottom: 4px; }
.large .caret { margin-left: 1px; }
.line { height: 13px; line-height: 11px; }
.w70 { width: 70px; }
.w65 { width: 65px; }
.w42 { width: 42px; }
.w80 { width: 72px; }
.w40 { width: 44px; }
.g-styles .body { padding-left: 7px; }
.g-size .body { padding-left: 5px; }
.paste { width: 48px; }
.stack { display: flex; flex-direction: column; }
.stack button { height: 22px; justify-content: flex-start; gap: 5px; }
.stack.wide { width: 88px; padding-left: 9px; margin-top: -2px; }
.text { display: flex; align-items: center; gap: 4px; white-space: nowrap; }
.pick { position: relative; height: 22px; margin-right: -1px; }
.pick select { appearance: none; width: 100%; height: 22px; border: 1px solid #c2c7cd; border-radius: 0; background: #fff; padding: 0 2px; font: inherit; color: #10141c; }
.pick::after { content: ""; position: absolute; right: 5px; top: 10px; border: 3px solid transparent; border-top-color: #6a6f76; border-bottom: 0; }
.w-font { width: 113px; }
.w-size { width: 44px; }
.w-num { width: 134px; }
.tool { width: 23px; height: 22px; display: flex; align-items: center; justify-content: center; flex: none; }
.tool.on { border: 1px solid #b98b2e; border-radius: 3px; background: linear-gradient(#fbd568, #fde58a 50%, #ffd54e); }
.serif { font-family: "Liberation Serif", serif; font-weight: 700; font-size: 14px; color: #14172b; }
.big { font-size: 17px; padding-left: 3px; }
.mid { font-size: 13px; padding-left: 3px; }
.big svg, .mid svg { align-self: flex-start; margin-top: 4px; }
.i { font-style: italic; }
.u { text-decoration: underline; }
.sep { flex: none; width: 1px; height: 20px; background: #cdd1d6; margin: 0 5px 0 8px; }
.sep.narrow { margin: 0 4px; }
.fontc { margin-left: 4px; }
.half { display: flex; flex-direction: column; gap: 7px; }
.half .sep { margin: 0 4px; }
.g-align .half:first-child { width: 127px; }
.orient { width: 30px; gap: 1px; }
.tallsep { width: 1px; height: 50px; background: #cdd1d6; margin-right: 7px; }
.half.right button { height: 22px; gap: 2px; }
.half.right .caret { margin-left: 4px; }
.pct { width: 28px; font-size: 13px; }
.comma { width: 20px; }
.dec { flex-direction: column; font: 700 9px/11px "Liberation Sans", sans-serif; align-items: flex-end; padding-right: 2px; }
.dec span { display: flex; align-items: center; gap: 1px; }

.formula { display: flex; height: 21px; margin: 3px 0 4px; border-top: 1px solid #858c95; border-bottom: 1px solid #858c95; }
.namebox { width: 160px; background: #fff; display: flex; align-items: center; }
.namebox input { width: 140px; border: 0; background: none; text-align: center; font: 12px/16px "Open Sans", sans-serif; color: #14181f; padding: 0; outline: 0; }
.namebox .caret { margin-left: 6px; border-width: 4px 4px 0; }
.fx { width: 85px; display: flex; align-items: center; justify-content: space-between; border: 1px solid #9aa1aa; border-width: 0 1px; border-radius: 10px 0 0 10px; background: #d9dee4; padding: 0 6px 0 5px; }
.knob { width: 9px; height: 9px; border-radius: 50%; background: linear-gradient(#aeb2b6, #f4f5f6); }
.fx button { font: italic 700 15px/16px "Liberation Serif", serif; color: #2e333b; }
.fx sub { font-size: 11px; }
.entry { flex: 1; min-width: 0; border: 0; background: #fff; outline: 0; }
.expand { width: 16px; display: flex; align-items: center; justify-content: center; background: #dfe3e8; border: 1px solid #a5abb2; }

.sheet { display: flex; border-top: 1px solid #858c95; }
.cells { flex: 1; min-width: 0; overflow: hidden; background: #fff; }
table { table-layout: fixed; width: 1291px; border-collapse: separate; border-spacing: 0; font: 13px/16px "Liberation Sans", Arial, sans-serif; color: #10121c; }
.c-head { width: 26px; }
.c-a { width: 176px; }
.c-b { width: 129px; }
.c-n { width: 80px; }
th { height: 17px; padding: 0; font-weight: 400; color: #33383f; background: #dce1e7; border-right: 1px solid #b1b7be; border-bottom: 1px solid #b1b7be; }
thead th { font-size: 14px; }
th.corner { background: linear-gradient(135deg, #dce1e7 70%, #b4bbc4 70%); }
th.sel { background: #fdd868; border-color: #c99a36; }
.tall > * { height: 34px; vertical-align: bottom; }
td { height: 17px; padding: 0 2px; border-right: 1px solid #d3d8dc; border-bottom: 1px solid #d3d8dc; }
td.under { border-bottom-color: #0d0f22; }
td.edge { border-right-color: #6a0303; }
td.ink { border-color: #0d0f22; }
td.code { background: linear-gradient(135deg, #16791c 4px, transparent 4px) no-repeat 0 0 / 6px 6px; }
td.num { text-align: right; }
td.range { text-align: center; font-weight: 700; padding: 0; border-color: #0d0f22; }
td.red { background: #b00505; color: #5a0508; border-right-color: #5d0303; }
td.cyan { background: #14d9e6; color: #08222c; }
td.cursor { position: relative; }
.frame { position: absolute; inset: -2px; left: -1px; border: 3px solid #14162b; border-left-width: 1px; }
.frame::after { content: ""; position: absolute; right: -4px; bottom: -4px; width: 4px; height: 4px; background: #14162b; border: solid #fff; border-width: 1px 0 0 1px; box-sizing: content-box; }

.vscroll { width: 20px; display: flex; flex-direction: column; padding-right: 4px; background: linear-gradient(90deg, #e9ecf0 15px, #6f757d 15px, #6f757d 16px, #dce1e7 16px); }
.vscroll button { height: 17px; display: flex; align-items: center; justify-content: center; }
.splitbox { height: 8px; width: 15px; border: 1px solid #70767e; background: linear-gradient(#fff 2px, #767c84 2px, #767c84 3px, #fff 3px); background-clip: content-box; padding: 0 3px; }
.thumb { flex: 3; width: 14px; border: 1px solid #858b9a; border-radius: 2px; background: linear-gradient(90deg, #fbfcfd, #dfe3e9); display: flex; align-items: center; justify-content: center; }
.track { flex: 1; }
.grip { width: 8px; height: 7px; background: repeating-linear-gradient(#7e848c 0 1px, transparent 1px 2px); }
.tri { width: 0; height: 0; border: 5px solid transparent; }
.tri.up { border-top: 0; border-bottom-color: #3c4148; }
.tri.down { border-bottom: 0; border-top-color: #3c4148; }
.tri.left { border-left: 0; border-right-color: #3c4148; }
.tri.rightward { border-right: 0; border-left-color: #3c4148; }

.sheetbar { display: flex; height: 17px; background: #dbe0e6; border-top: 1px solid #90969f; }
.nav { width: 62px; display: flex; justify-content: space-between; padding: 0 5px; border-right: 1px solid #858c96; }
.nav button { width: 8px; }
.stab { width: 54px; color: #444a52; border-bottom: 1px solid #858c96; line-height: 15px; text-align: left; padding-left: 1px; }
.stab.first { width: 85px; background: #e6eaee; border-right: 1px solid #858c96; padding-left: 15px; }
.stab.current { width: 75px; background: #fff; border: 0; font-size: 12px; font-weight: 700; color: #3d3f44; white-space: nowrap; padding-left: 8px; }
.stab.new { width: 18px; display: flex; align-items: center; justify-content: center; padding: 0; }
.hscroll { width: 506px; margin-left: auto; margin-right: 19px; display: flex; align-items: stretch; }
.hscroll button { width: 18px; display: flex; align-items: center; justify-content: center; }
.vsplit { width: 8px; border: 1px solid #70767e; background: linear-gradient(90deg, #fff 2px, #767c84 2px, #767c84 3px, #fff 3px); }
.hthumb { flex: 12; border: 1px solid #8d939b; border-radius: 2px; background: linear-gradient(#f6f8fa, #dde2e8); display: flex; align-items: center; justify-content: center; }
.htrack { flex: 1; }
.vgrip { width: 7px; height: 7px; background: repeating-linear-gradient(90deg, #7e848c 0 1px, transparent 1px 2px); }

.status { display: flex; align-items: center; height: 22px; border-top: 1px solid #a2a7ad; background: linear-gradient(#f2f4f6, #d9dde1 50%, #c4c9cf); }
.ready { width: 49px; padding-left: 8px; border-right: 1px solid #8f959c; }
.view { margin-left: auto; display: flex; align-items: center; padding: 0 4px; height: 20px; border-left: 1px solid #9aa0a7; }
.view button { width: 19px; height: 19px; display: flex; align-items: center; justify-content: center; }
.view .on { border: 1px solid #c79a2e; border-radius: 2px; background: #ffe07a; }
.view .round { width: 16px; }
.pctlabel { width: 44px; text-align: center; }
input[type=range] { appearance: none; width: 100px; height: 16px; margin: 0; background: linear-gradient(#868d96, #868d96) no-repeat center / 100% 1px; }
input[type=range]::-webkit-slider-thumb { appearance: none; width: 9px; height: 12px; border: 1px solid #62686f; border-radius: 1px 1px 5px 5px; background: #f8f9fa; }

.taskbar { display: flex; align-items: stretch; height: 40px; border-top: 1px solid #15181a; background:
  radial-gradient(ellipse 90px 30px at 10% 80%, #6a696055, transparent),
  radial-gradient(ellipse 160px 30px at 44% 70%, #6b706f66, transparent),
  radial-gradient(ellipse 200px 40px at 60% 60%, #70716a55, transparent),
  linear-gradient(90deg, #454c4d, #4c5253 50%, #555a59 66%, #343c40 73%, #353d41); }
.orb { width: 54px; }
.app { width: 62px; padding-left: 6px; }
.app + .app { padding-left: 8px; }
.win { width: 58px; margin: 0 2px 0 0; border: 1px solid #1d2123; border-radius: 3px; display: flex; align-items: center; justify-content: center; background: linear-gradient(135deg, #b3b5b4, #74797b 50%, #666c6e); box-shadow: inset 0 0 0 1px #bfc3c4; }
.app + .win { margin-left: 6px; }
.win.stacked { width: 55px; margin-right: 8px; box-shadow: inset 0 0 0 1px #a9aeaf, 3px 0 0 #6e7476, 4px 0 0 #202426; background: linear-gradient(135deg, #8f9293, #63696b 50%, #595f61); }
.win.current { background: linear-gradient(135deg, #f0f0f0, #b9bcbc 50%, #a6aaab); width: 60px; }
.tray { margin-left: auto; display: flex; align-items: center; gap: 8px; color: #fff; }
.lang { margin: 0 8px 6px 0; }
.tri.light { border-width: 0 4px 4px; border-bottom-color: #fff; margin-right: 4px; }
.clock { width: 84px; display: flex; flex-direction: column; align-items: center; justify-content: center; line-height: 17px; color: #fff; }
.desktop { width: 14px; border: 1px solid #8b9294; background: linear-gradient(#5a6164, #14191b 60%, #3b4245); }
</style>
